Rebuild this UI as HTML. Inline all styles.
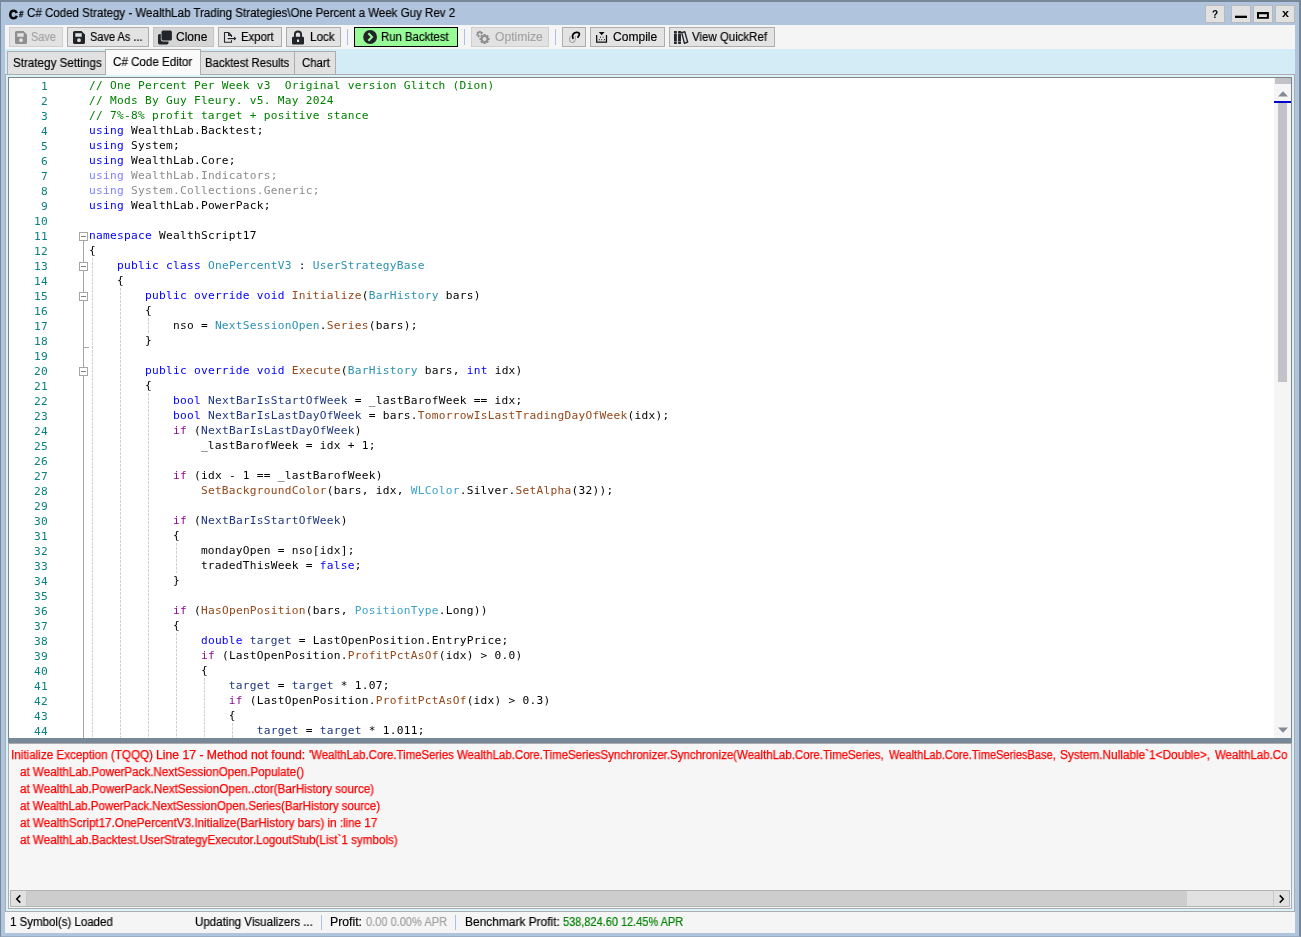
<!DOCTYPE html>
<html lang="en"><head>
<meta charset="utf-8">
<title>C# Coded Strategy</title>
<style>
*{box-sizing:border-box;margin:0;padding:0}
html,body{width:1301px;height:937px;overflow:hidden;background:#b0c4de}
body{position:relative;font-family:"Liberation Sans",sans-serif;font-size:12px;color:#000}
div,span,pre,svg{position:absolute}
pre span{position:static}
.x{white-space:pre;line-height:14px;height:14px;font-size:12px;will-change:transform;-webkit-text-stroke:0.18px currentColor}
#frame{left:0;top:0;width:1301px;height:937px;border-style:solid;border-color:#778899 #778899 #99acc2 #778899;border-width:2px 2px 1px 1px;background:#b0c4de}
.wb{top:5px;width:20px;height:18px;background:#e1e1e1;border:1px solid #b9b9b9}
#toolbar{left:5px;top:25px;width:1290px;height:24px;background:#f5f5f5}
.tb{top:27px;height:20px;background:#e3e3e3;border:1px solid #adadad}
.tb.dis{border-color:#cfcfcf;background:#e2e2e2}
.tb.hot{background:#d5d5d5;border-color:#c4c4c4}
.tb.run{background:#98fb98;border-color:#000}
.gray{color:#a3a3a3}
.sep{top:29px;width:1px;height:16px;background:#a9c1e6}
#tabstrip{left:5px;top:49px;width:1290px;height:25px;background:#d4ecf5}
.tab{top:51px;height:23px;background:#e1e1e1;border:1px solid #adadad;border-bottom:none}
.tab.sel{top:49px;height:26px;background:#fafafa;z-index:3}
#tabbody{left:5px;top:74px;width:1290px;height:838px;border:1px solid #acacac;background:#daf2fa}
#editor{left:8px;top:77px;width:1284px;height:661px;border:1px solid #828282;border-bottom:none;background:#fff;overflow:hidden}
#ln,#code{font-family:"DejaVu Sans Mono","Liberation Mono",monospace;font-size:11.2px;letter-spacing:0.257px;line-height:15px;top:0;white-space:pre;will-change:transform}
#ln{left:-0.5px;top:1px;width:39px;text-align:right;color:#0a8080}
#code{left:80px;color:#000}
.c{color:#008000}.k{color:#0000ff}.t{color:#2b91af}.s{color:#3da1cc}.m{color:#93481a}.v{color:#1f377f}.p{color:#8f0a92}
.f{color:#8c8c8c}.fk{color:#8080ff}
.g{width:1px;background:repeating-linear-gradient(to bottom,#d2d2d2 0,#d2d2d2 3px,transparent 3px,transparent 4px)}
.fold{width:9px;height:9px;border:1px solid #a5a5a5;background:#fff;left:70px}
.fold i{position:absolute;left:1px;top:3px;width:5px;height:1px;background:#808080}
#split{left:8px;top:738px;width:1284px;height:5px;background:#778899}
#out{left:8px;top:743px;width:1284px;height:166px;border:1px solid #ababab;background:#f6f6f6;overflow:hidden}
.e{color:#ff0000;-webkit-text-stroke:0.25px currentColor}
#status{left:5px;top:912px;width:1290px;height:21px;background:#f5f5f5}
.ssep{top:915px;width:1px;height:15px;background:#a9c1e6}
</style>
</head>
<body>
<div id="frame"></div>
<!-- title bar -->
<span class="x" style="left:9.2px;top:6.5px;font-weight:bold;font-size:13.5px;line-height:16px;height:16px;-webkit-text-stroke:0.9px #000;transform:scaleX(0.88);transform-origin:0 0">C</span>
<span class="x" style="left:18.6px;top:9px;font-weight:bold;font-size:8.5px;line-height:10px;height:10px;font-style:italic;-webkit-text-stroke:0.3px #000;transform:scaleX(0.9);transform-origin:0 0">#</span>
<span class="x" style="left: 26.53px; top: 6px; transform-origin: 0px 0px; transform: scaleX(0.9619);">C# Coded Strategy - WealthLab Trading Strategies\One Percent a Week Guy Rev 2</span>
<div class="wb" style="left:1205px"><span class="x" style="left:6.3px;top:2px;font-weight:bold;font-size:10px;-webkit-text-stroke:0">?</span></div>
<div class="wb" style="left:1231px"><svg style="left:0;top:0" width="18" height="16" viewBox="0 0 18 16"><rect x="3" y="9.7" width="12" height="2.3" fill="#000"></rect></svg></div>
<div class="wb" style="left:1253px"><svg style="left:0;top:0" width="18" height="16" viewBox="0 0 18 16"><path fill-rule="evenodd" d="M3 6H14.9V12.8H3ZM5 8.3V10.9H12.9V8.3Z" fill="#000"></path></svg></div>
<div class="wb" style="left:1275px"><span class="x" style="left:6.3px;top:0;font-weight:bold;font-size:10.5px;transform:scaleX(1.2);transform-origin:0 0;-webkit-text-stroke:0">x</span></div>
<!-- toolbar -->
<div id="toolbar"></div>
<div class="tb dis" style="left:9px;width:54px"></div>
<div class="tb" style="left:67px;width:82px"></div>
<div class="tb hot" style="left:153px;width:61px"></div>
<div class="tb" style="left:218px;width:64px"></div>
<div class="tb" style="left:286px;width:55px"></div>
<div class="sep" style="left:347px"></div>
<div class="tb run" style="left:354px;width:104px"></div>
<div class="sep" style="left:464px"></div>
<div class="tb dis" style="left:471px;width:78px"></div>
<div class="sep" style="left:555px"></div>
<div class="tb" style="left:562px;width:24px"></div>
<div class="tb" style="left:590px;width:75px"></div>
<div class="tb" style="left:669px;width:106px"></div>
<span class="x gray" style="top: 30px; left: 31.06px; transform-origin: 0px 0px; transform: scaleX(0.9061);">Save</span>
<span class="x" style="top: 30px; left: 90.11px; transform-origin: 0px 0px; transform: scaleX(0.9152);">Save As ...</span>
<span class="x" style="top: 30px; left: 176.01px; transform-origin: 0px 0px; transform: scaleX(0.9987);">Clone</span>
<span class="x" style="top: 30px; left: 241.09px; transform-origin: 0px 0px; transform: scaleX(0.9431);">Export</span>
<span class="x" style="top: 30px; left: 309.6px; transform-origin: 0px 0px; transform: scaleX(0.9742);">Lock</span>
<span class="x" style="top: 30px; left: 380.72px; transform-origin: 0px 0px; transform: scaleX(0.9483);">Run Backtest</span>
<span class="x gray" style="top: 30px; left: 494.54px; transform-origin: 0px 0px; transform: scaleX(1.0082);">Optimize</span>
<span class="x" style="top: 30px; left: 613.41px; transform-origin: 0px 0px; transform: scaleX(1.004);">Compile</span>
<span class="x" style="top: 30px; left: 691.58px; transform-origin: 0px 0px; transform: scaleX(0.9553);">View QuickRef</span>
<svg style="left:15px;top:31px" width="12" height="13" viewBox="0 0 12 13"><path fill-rule="evenodd" fill="#8f8f8f" d="M1.6 0H8.5L12 3.5V11.4Q12 13 10.4 13H1.6Q0 13 0 11.4V1.6Q0 0 1.6 0ZM2.3 2.2V5.7H8.7V2.2ZM6 7.3A1.9 1.9 0 1 0 6 11.1A1.9 1.9 0 1 0 6 7.3Z"></path></svg>
<svg style="left:73px;top:31px" width="12" height="13" viewBox="0 0 12 13"><path fill-rule="evenodd" fill="#212529" d="M1.6 0H8.5L12 3.5V11.4Q12 13 10.4 13H1.6Q0 13 0 11.4V1.6Q0 0 1.6 0ZM2.3 2.2V5.7H8.7V2.2ZM6 7.3A1.9 1.9 0 1 0 6 11.1A1.9 1.9 0 1 0 6 7.3Z"></path></svg>
<svg style="left:158px;top:30px" width="15" height="15" viewBox="0 0 15 15"><rect x="0" y="4" width="10.5" height="10.4" rx="1.6" fill="#212529"></rect><rect x="2.8" y="-0.2" width="11.8" height="11.6" rx="2" fill="#d5d5d5"></rect><rect x="3.5" y="0.5" width="10.4" height="10.1" rx="1.5" fill="#212529"></rect></svg>
<svg style="left:223px;top:31px" width="15" height="13" viewBox="0 0 15 13"><path d="M5.6 1.5H1.5V11.3H8.5V9.2M5.6 1.5L8.5 4.4M5.6 1.5V4.4H8.5V6" fill="none" stroke="#212529" stroke-width="1.1" stroke-linejoin="round"></path><path d="M4.6 7.6H12.6" stroke="#212529" stroke-width="1.2" fill="none"></path><path d="M11 5.6L13.4 7.6L11 9.6Z" fill="#212529"></path></svg>
<svg style="left:291px;top:30px" width="14" height="15" viewBox="0 0 14 15"><path d="M3.9 7.2V4.6A3.1 3.1 0 0 1 10.1 4.6V7.2" fill="none" stroke="#212529" stroke-width="1.9"></path><path fill-rule="evenodd" fill="#212529" d="M2.2 6.7H11.8Q13 6.7 13 7.9V13.2Q13 14.4 11.8 14.4H2.2Q1 14.4 1 13.2V7.9Q1 6.7 2.2 6.7ZM6 9.4V12H8.1V9.4Z"></path></svg>
<svg style="left:362px;top:29px" width="16" height="16" viewBox="0 0 16 16"><circle cx="8.1" cy="8" r="6.9" fill="#212529"></circle><path d="M6.4 4.3L10 8L6.4 11.7" fill="none" stroke="#98fb98" stroke-width="2.1"></path></svg>
<svg style="left:470px;top:26px" width="22" height="20" viewBox="0 0 22 20"><path d="M12.23 7.87 L13.34 8.45 L12.86 10.02 L11.61 9.87 L11.55 9.93 L11.79 11.17 L10.26 11.76 L9.61 10.70 L9.52 10.69 L8.70 11.64 L7.29 10.82 L7.71 9.64 L7.66 9.57 L6.40 9.53 L6.16 7.91 L7.35 7.50 L7.38 7.42 L6.62 6.41 L7.74 5.21 L8.80 5.89 L8.88 5.86 L9.20 4.64 L10.83 4.77 L10.96 6.01 L11.04 6.06 L12.19 5.55 L13.11 6.91 L12.22 7.79Z M8.50 8.20 a1.25 1.25 0 1 0 2.50 0 a1.25 1.25 0 1 0 -2.50 0Z" fill="#8f8f8f" fill-rule="evenodd"></path><circle cx="14.55" cy="13" r="5.6" fill="#e2e2e2"></circle><path d="M17.99 11.64 L19.65 11.96 L19.65 14.04 L17.99 14.36 L17.95 14.47 L18.89 15.87 L17.42 17.34 L16.02 16.40 L15.91 16.44 L15.59 18.10 L13.51 18.10 L13.19 16.44 L13.08 16.40 L11.68 17.34 L10.21 15.87 L11.15 14.47 L11.11 14.36 L9.45 14.04 L9.45 11.96 L11.11 11.64 L11.15 11.53 L10.21 10.13 L11.68 8.66 L13.08 9.60 L13.19 9.56 L13.51 7.90 L15.59 7.90 L15.91 9.56 L16.02 9.60 L17.42 8.66 L18.89 10.13 L17.95 11.53Z M12.65 13.00 a1.90 1.90 0 1 0 3.80 0 a1.90 1.90 0 1 0 -3.80 0Z" fill="#8f8f8f" fill-rule="evenodd"></path></svg>
<svg style="left:560px;top:26px" width="30" height="22" viewBox="0 0 30 22"><path d="M10.45 10.45 C9.39 12.21 8.69 15.02 11.27 16.20 S16.20 14.32 15.26 10.33" fill="none" stroke="#a6a6a6" stroke-width="1.15" stroke-linecap="round"></path><path d="M12.91 12.21 C11.74 9.39 13.15 6.81 16.43 6.46 S20.42 8.22 17.96 11.15" fill="none" stroke="#000" stroke-width="1.8" stroke-linecap="round"></path></svg>
<svg style="left:590px;top:26px" width="30" height="22" viewBox="0 0 30 22"><path d="M6.69 9.04 V16.20 H16.48 V9.04" fill="none" stroke="#0a0a0a" stroke-width="1.25"></path><path d="M7.04 15.26 H16.20" stroke="#8a8a8a" stroke-width="0.6"></path><path d="M8.73 5.92 L14.60 5.92 L11.67 9.15Z" fill="#0a0a0a"></path><circle cx="10.45" cy="11.15" r="0.62" fill="#222"></circle><circle cx="13.15" cy="11.15" r="0.62" fill="#555"></circle><circle cx="9.34" cy="13.57" r="0.6" fill="#111"></circle><circle cx="11.67" cy="13.57" r="0.6" fill="#333"></circle><circle cx="14.44" cy="13.57" r="0.6" fill="#111"></circle></svg>
<svg style="left:668px;top:26px" width="30" height="22" viewBox="0 0 30 22"><rect x="5.99" y="4.98" width="2.86" height="12.91" rx="0.3" fill="#212529"></rect><rect x="10.09" y="4.98" width="2.86" height="12.91" rx="0.3" fill="#212529"></rect><path d="M5.87 7.56 H13.03 M5.87 15.49 H13.03" stroke="#bdbdbd" stroke-width="0.55"></path><path d="M13.73 6.69 L16.78 5.75 L19.72 16.20 L16.43 17.25Z" fill="none" stroke="#212529" stroke-width="1.35" stroke-linejoin="round"></path><path d="M12.96 6.15 L14.08 6.15" stroke="#212529" stroke-width="1"></path></svg>

<!-- tabs -->
<div id="tabstrip"></div>
<div id="tabbody"></div>
<div class="tab" style="left:7px;width:99px"></div>
<div class="tab" style="left:200px;width:95px"></div>
<div class="tab" style="left:294px;width:42px"></div>
<div class="tab sel" style="left:105px;width:96px"></div>
<span class="x" style="top: 56px; z-index: 4; left: 12.59px; transform-origin: 0px 0px; transform: scaleX(0.9701);">Strategy Settings</span>
<span class="x" style="top: 55px; z-index: 4; left: 113.43px; transform-origin: 0px 0px; transform: scaleX(0.967);">C# Code Editor</span>
<span class="x" style="top: 56px; z-index: 4; left: 204.95px; transform-origin: 0px 0px; transform: scaleX(0.9437);">Backtest Results</span>
<span class="x" style="top: 56px; z-index: 4; left: 301.58px; transform-origin: 0px 0px; transform: scaleX(0.9488);">Chart</span>
<!-- editor -->
<div id="editor">
<pre id="ln">1
2
3
4
5
6
7
8
9
10
11
12
13
14
15
16
17
18
19
20
21
22
23
24
25
26
27
28
29
30
31
32
33
34
35
36
37
38
39
40
41
42
43
44</pre>
<pre id="code"><span class="c">// One Percent Per Week v3  Original version Glitch (Dion)</span>
<span class="c">// Mods By Guy Fleury. v5. May 2024</span>
<span class="c">// 7%-8% profit target + positive stance</span>
<span class="k">using</span> WealthLab.Backtest;
<span class="k">using</span> System;
<span class="k">using</span> WealthLab.Core;
<span class="fk">using</span><span class="f"> WealthLab.Indicators;</span>
<span class="fk">using</span><span class="f"> System.Collections.Generic;</span>
<span class="k">using</span> WealthLab.PowerPack;

<span class="k">namespace</span> WealthScript17
{
    <span class="k">public class</span> <span class="t">OnePercentV3</span> : <span class="t">UserStrategyBase</span>
    {
        <span class="k">public override void</span> <span class="m">Initialize</span>(<span class="t">BarHistory</span> bars)
        {
            nso = <span class="t">NextSessionOpen</span>.<span class="m">Series</span>(bars);
        }

        <span class="k">public override void</span> <span class="m">Execute</span>(<span class="t">BarHistory</span> bars, <span class="k">int</span> idx)
        {
            <span class="k">bool</span> <span class="v">NextBarIsStartOfWeek</span> = _lastBarofWeek == idx;
            <span class="k">bool</span> <span class="v">NextBarIsLastDayOfWeek</span> = bars.<span class="m">TomorrowIsLastTradingDayOfWeek</span>(idx);
            <span class="p">if</span> (<span class="v">NextBarIsLastDayOfWeek</span>)
                _lastBarofWeek = idx + 1;

            <span class="p">if</span> (idx - 1 == _lastBarofWeek)
                <span class="m">SetBackgroundColor</span>(bars, idx, <span class="s">WLColor</span>.Silver.<span class="m">SetAlpha</span>(32));

            <span class="p">if</span> (<span class="v">NextBarIsStartOfWeek</span>)
            {
                mondayOpen = nso[idx];
                tradedThisWeek = <span class="k">false</span>;
            }

            <span class="p">if</span> (<span class="m">HasOpenPosition</span>(bars, <span class="s">PositionType</span>.Long))
            {
                <span class="k">double</span> <span class="v">target</span> = LastOpenPosition.EntryPrice;
                <span class="p">if</span> (LastOpenPosition.<span class="m">ProfitPctAsOf</span>(idx) &gt; 0.0)
                {
                    <span class="v">target</span> = <span class="v">target</span> * 1.07;
                    <span class="p">if</span> (LastOpenPosition.<span class="m">ProfitPctAsOf</span>(idx) &gt; 0.3)
                    {
                        <span class="v">target</span> = <span class="v">target</span> * 1.011;</pre>

<div style="left:74px;top:163px;width:1px;height:500px;background:#a5a5a5"></div>
<div style="left:74px;top:269px;width:6px;height:1px;background:#a5a5a5"></div>
<div class="fold" style="top:154px"><i></i></div>
<div class="fold" style="top:184px"><i></i></div>
<div class="fold" style="top:214px"><i></i></div>
<div class="fold" style="top:289px"><i></i></div>
<div class="g" style="left:83px;top:180px;height:481px"></div>
<div class="g" style="left:111px;top:210px;height:451px"></div>
<div class="g" style="left:139px;top:240px;height:15px"></div>
<div class="g" style="left:139px;top:315px;height:346px"></div>
<div class="g" style="left:167px;top:465px;height:30px"></div>
<div class="g" style="left:167px;top:555px;height:106px"></div>
<div class="g" style="left:195px;top:600px;height:61px"></div>
<div class="g" style="left:223px;top:645px;height:16px"></div>
<!-- vertical scrollbar -->
<div style="left:1265px;top:0;width:17px;height:661px;background:#f5f5f5"></div>
<div style="left:1266px;top:0;width:16px;height:6px;background:#c2c3c9"></div>
<svg style="left:1268.5px;top:12.5px" width="10" height="6" viewBox="0 0 10 6"><path d="M0 5.5 L5 0.3 L10 5.5Z" fill="#868999"></path></svg>
<div style="left:1265px;top:23px;width:17px;height:2px;background:#0000cd"></div>
<div style="left:1269px;top:25px;width:9px;height:279px;background:#c2c3c9"></div>
<svg style="left:1268.5px;top:648.6px" width="10" height="6" viewBox="0 0 10 6"><path d="M0 0.5 L5 5.7 L10 0.5Z" fill="#868999"></path></svg>
</div>
<div id="split"></div>
<div id="out"></div>
<span class="x e" style="top: 748px; left: 10.73px; transform-origin: 0px 0px; transform: scaleX(0.9722);">Initialize Exception (TQQQ)</span>
<span class="x e" style="top: 748px; left: 156.1px; transform-origin: 0px 0px; transform: scaleX(1.0164);">Line 17 - Method not found:</span>
<span class="x e" style="top: 748px; left: 308.68px; transform-origin: 0px 0px; transform: scaleX(0.9507);">'WealthLab.Core.TimeSeries</span>
<span class="x e" style="top: 748px; left: 457.45px; transform-origin: 0px 0px; transform: scaleX(0.9564);">WealthLab.Core.TimeSeriesSynchronizer.Synchronize(WealthLab.Core.TimeSeries,</span>
<span class="x e" style="top: 748px; left: 888.75px; transform-origin: 0px 0px; transform: scaleX(0.9227);">WealthLab.Core.TimeSeriesBase,</span>
<span class="x e" style="top: 748px; left: 1060.33px; transform-origin: 0px 0px; transform: scaleX(0.9821);">System.Nullable`1&lt;Double&gt;,</span>
<span class="x e" style="top: 748px; left: 1215.25px; transform-origin: 0px 0px; transform: scaleX(0.9538);">WealthLab.Co</span>
<span class="x e" style="top: 765px; left: 19.78px; transform-origin: 0px 0px; transform: scaleX(0.9683);">at WealthLab.PowerPack.NextSessionOpen.Populate()</span>
<span class="x e" style="top: 782px; left: 19.79px; transform-origin: 0px 0px; transform: scaleX(0.9711);">at WealthLab.PowerPack.NextSessionOpen..ctor(BarHistory source)</span>
<span class="x e" style="top: 799px; left: 19.78px; transform-origin: 0px 0px; transform: scaleX(0.9596);">at WealthLab.PowerPack.NextSessionOpen.Series(BarHistory source)</span>
<span class="x e" style="top: 816px; left: 19.78px; transform-origin: 0px 0px; transform: scaleX(0.9691);">at WealthScript17.OnePercentV3.Initialize(BarHistory bars) in :line 17</span>
<span class="x e" style="top: 833px; left: 19.81px; transform-origin: 0px 0px; transform: scaleX(0.9702);">at WealthLab.Backtest.UserStrategyExecutor.LogoutStub(List`1 symbols)</span>
<!-- h scrollbar -->
<div style="left:10px;top:890px;width:1280px;height:17px;background:#e1e1e1;border:1px solid #b4b4b4"></div>
<div style="left:27px;top:891px;width:1160px;height:15px;background:#cdcdcd"></div>
<div style="left:26px;top:891px;width:1px;height:15px;background:#c8c8c8"></div>
<div style="left:1273px;top:891px;width:1px;height:15px;background:#c8c8c8"></div>
<svg style="left:15px;top:894px" width="7" height="10" viewBox="0 0 7 10"><path d="M5.3 1.4 L1.7 5 L5.3 8.6" fill="none" stroke="#000" stroke-width="1.5"></path></svg>
<svg style="left:1278px;top:894px" width="7" height="10" viewBox="0 0 7 10"><path d="M1.7 1.4 L5.3 5 L1.7 8.6" fill="none" stroke="#000" stroke-width="1.5"></path></svg>
<!-- status -->
<div id="status"></div>
<span class="x" style="top: 915px; left: 10.19px; transform-origin: 0px 0px; transform: scaleX(0.9574);">1 Symbol(s) Loaded</span>
<span class="x" style="top: 915px; left: 195.05px; transform-origin: 0px 0px; transform: scaleX(0.9614);">Updating Visualizers ...</span>
<div class="ssep" style="left:321px"></div>
<span class="x" style="top: 915px; left: 330.2px; transform-origin: 0px 0px; transform: scaleX(1.0219);">Profit:</span>
<span class="x" style="top: 915px; color: rgb(160, 160, 160); left: 366.06px; transform-origin: 0px 0px; transform: scaleX(0.9197);">0.00 0.00% APR</span>
<div class="ssep" style="left:455px"></div>
<span class="x" style="top: 915px; left: 464.6px; transform-origin: 0px 0px; transform: scaleX(0.9938);">Benchmark Profit:</span>
<span class="x" style="top: 915px; color: rgb(0, 128, 0); left: 563.3px; transform-origin: 0px 0px; transform: scaleX(0.9142);">538,824.60 12.45% APR</span>


</body></html>
